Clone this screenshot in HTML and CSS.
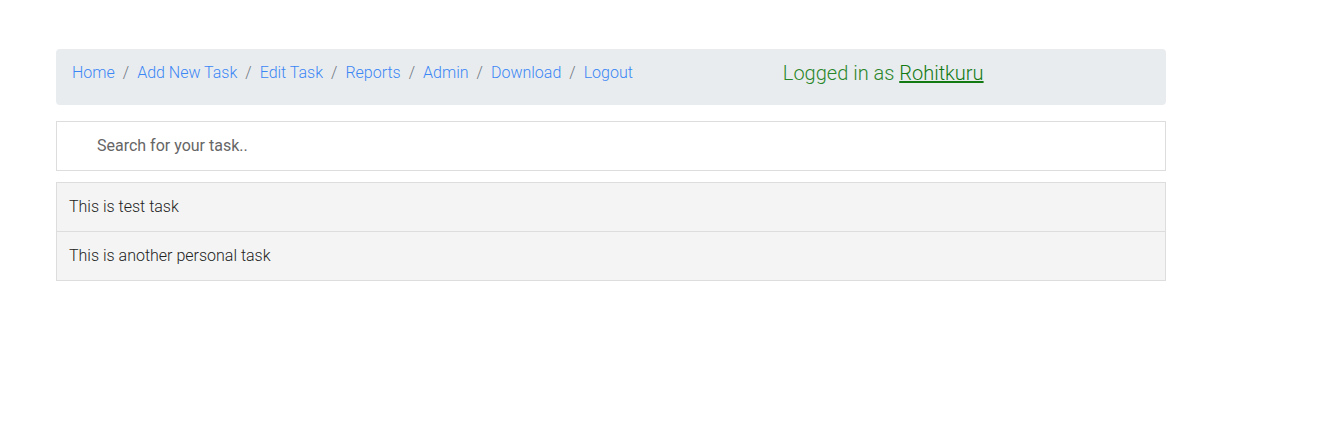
FILE: index.html
```html
<!DOCTYPE html>
<html>
<head>
<meta charset="utf-8">
<link rel="stylesheet" href="styles.css">
</head>
<body>
<div class="page">
  <nav class="crumbs">
    <ol class="crumb-list">
      <li><a href="#">Home</a></li>
      <li><a href="#">Add New Task</a></li>
      <li><a href="#">Edit Task</a></li>
      <li><a href="#">Reports</a></li>
      <li><a href="#">Admin</a></li>
      <li><a href="#">Download</a></li>
      <li><a href="#">Logout</a></li>
    </ol>
    <div class="user">Logged in as <a href="#">Rohitkuru</a></div>
  </nav>
  <input class="search" type="text" placeholder="Search for your task..">
  <ul class="tasks">
    <li><a href="#">This is test task</a></li>
    <li><a href="#">This is another personal task</a></li>
  </ul>
</div>
</body>
</html>
```
FILE: styles.css
```css
* { box-sizing: border-box; }
body {
  margin: 0;
  font-family: Roboto, "Liberation Sans", sans-serif;
  font-weight: 300;
  font-size: 16px;
  line-height: 1.5;
  color: #212529;
  background: #fff;
}
.page {
  width: 1110px;
  margin: 49px 0 0 56px;
}
.crumbs {
  display: flex;
  align-items: flex-start;
  background: #e9ecef;
  border-radius: 4px;
  padding: 12px 16px 20px;
  margin-bottom: 16px;
}
.crumb-list {
  display: flex;
  list-style: none;
  margin: 0;
  padding: 0;
  height: 24px;
}
.crumb-list li + li::before {
  content: "/";
  color: #6c757d;
  padding: 0 8px;
}
.crumb-list a {
  color: #3b87f5;
  text-decoration: none;
}
.user {
  margin-left: 150px;
  font-size: 20px;
  line-height: 24px;
  color: #2a862a;
}
.user a {
  color: #137a13;
  text-decoration: underline;
}
.search {
  display: block;
  width: 100%;
  font-family: Roboto, "Liberation Sans", sans-serif;
  font-weight: 400;
  font-size: 16px;
  line-height: 24px;
  padding: 12px 20px 12px 40px;
  border: 1px solid #dddddd;
  margin: 0 0 12px;
  outline: none;
  color: #555;
}
.search::placeholder { color: #666; }
.tasks {
  list-style: none;
  margin: 0;
  padding: 0;
}
.tasks li a {
  display: block;
  border: 1px solid #dddddd;
  margin-top: -1px;
  background: #f4f4f4;
  padding: 12px;
  font-size: 16px;
  line-height: 24px;
  color: #222;
  text-decoration: none;
}
```
